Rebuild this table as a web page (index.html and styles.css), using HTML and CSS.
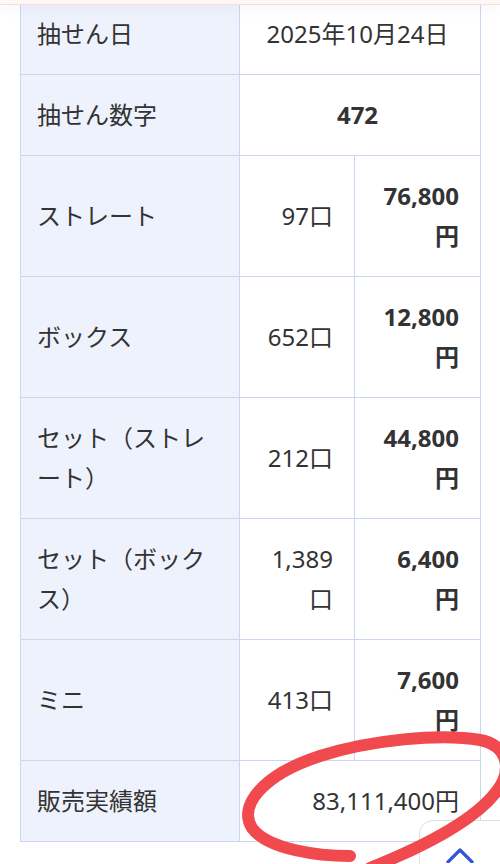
FILE: index.html
```html
<!DOCTYPE html>
<html lang="ja">
<head>
<meta charset="utf-8">
<title>抽せん結果</title>
<link rel="stylesheet" href="styles.css">
</head>
<body>
<header class="topbar"></header>
<main class="page">
  <table class="result">
    <colgroup>
      <col class="c-label">
      <col class="c-count">
      <col class="c-amount">
    </colgroup>
    <tbody>
      <tr>
        <th>抽せん日</th>
        <td class="center" colspan="2">2025年10月24日</td>
      </tr>
      <tr>
        <th>抽せん数字</th>
        <td class="center bold" colspan="2">472</td>
      </tr>
      <tr>
        <th>ストレート</th>
        <td class="num">97口</td>
        <td class="num amt">76,800円</td>
      </tr>
      <tr>
        <th>ボックス</th>
        <td class="num">652口</td>
        <td class="num amt">12,800円</td>
      </tr>
      <tr>
        <th>セット（ストレート）</th>
        <td class="num">212口</td>
        <td class="num amt">44,800円</td>
      </tr>
      <tr>
        <th>セット（ボックス）</th>
        <td class="num">1,389口</td>
        <td class="num amt">6,400円</td>
      </tr>
      <tr>
        <th>ミニ</th>
        <td class="num">413口</td>
        <td class="num amt">7,600円</td>
      </tr>
      <tr>
        <th>販売実績額</th>
        <td class="num" colspan="2">83,111,400円</td>
      </tr>
    </tbody>
  </table>
</main>
<button class="to-top" type="button" aria-label="ページトップへ">
  <svg width="28" height="16" viewBox="0 0 28 16"><path d="M2 15 L14 3 L26 15" fill="none" stroke="#2f56d6" stroke-width="3.2" stroke-linecap="round" stroke-linejoin="round"/></svg>
</button>
<svg class="mark" viewBox="240 720 260 144" width="260" height="144">
  <path d="M350 856 C320 856 268 850 252 828 C238 806 262 775 320 756 C370 740 440 733 480 740 C510 746 512 772 496 792 C476 818 430 844 370 868" fill="none" stroke="#f04a4f" stroke-width="12" stroke-linecap="round" stroke-linejoin="round"/>
</svg>
</body>
</html>
```

FILE: styles.css
```css
html, body {
  margin: 0;
  padding: 0;
  background: #ffffff;
}

body {
  font-family: "Noto Sans", "Noto Sans CJK JP", sans-serif;
  color: #333333;
  width: 500px;
  height: 864px;
  overflow: hidden;
  position: relative;
}

.topbar {
  position: fixed;
  top: 0;
  left: 0;
  right: 0;
  height: 4px;
  background: #fff6f6;
  border-bottom: 1px solid #f7dede;
  box-shadow: 0 3px 14px rgba(0, 0, 0, 0.07);
  z-index: 5;
}

.page {
  padding: 0 20px;
}

.result {
  width: 460px;
  margin-top: -7px;
  border-collapse: collapse;
  table-layout: fixed;
  font-size: 24px;
  line-height: 40px;
}

.c-label { width: 219px; }
.c-count { width: 115px; }
.c-amount { width: 126px; }

.result th,
.result td {
  border: 1px solid #c8d6f0;
  padding: 20px 21px 20px 16px;
  vertical-align: middle;
}

.result th {
  background: #eef2fc;
  font-weight: normal;
  text-align: left;
}

.result td {
  background: #ffffff;
}

.result .center {
  text-align: center;
}

.result .num {
  text-align: right;
}

.result .bold {
  font-weight: bold;
}

.result .amt {
  font-weight: bold;
  padding-left: 26px;
}

.to-top {
  position: fixed;
  left: 419px;
  top: 820px;
  width: 100px;
  height: 70px;
  box-sizing: border-box;
  padding: 26px 0 0 26px;
  margin: 0;
  background: #ffffff;
  border: 1px solid #dedede;
  border-radius: 14px;
  display: flex;
  align-items: flex-start;
  justify-content: flex-start;
}

.to-top svg {
  display: block;
  flex: none;
}

.mark {
  position: absolute;
  left: 240px;
  top: 720px;
  z-index: 10;
}
```
